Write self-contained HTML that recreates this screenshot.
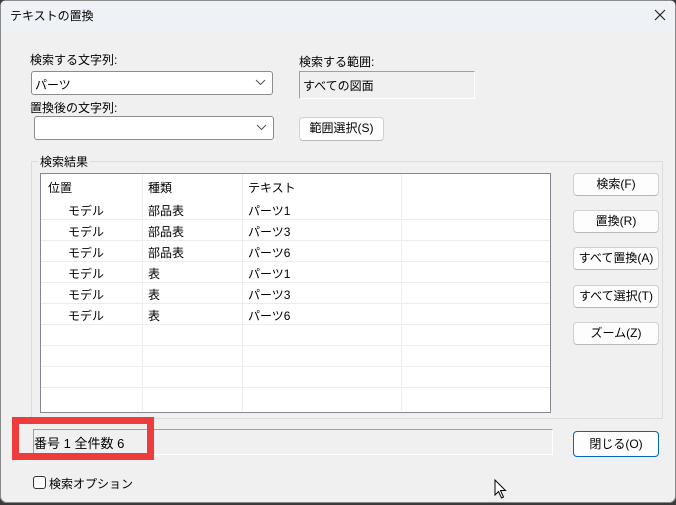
<!DOCTYPE html>
<html><head><meta charset="utf-8"><style>
*{box-sizing:border-box;margin:0;padding:0}
body{width:676px;height:505px;overflow:hidden;background:#3a3a3a;font-family:"Liberation Sans","Noto Sans CJK JP",sans-serif;font-size:12px;color:#000}
#win{position:absolute;left:0;top:0;width:676px;height:503px;background:#f0f0f0;box-shadow:inset 0 0 0 1px #8a8a8a;border-radius:7px;overflow:hidden}
#c{position:absolute;left:0;top:-1px;width:678px;height:507px}
.a{position:absolute;white-space:nowrap}
#title{left:1px;top:2px;width:674px;height:30px;background:#eef2f6}
.combo{background:#fff;border:1px solid #8c8c8c;border-radius:3px}
.btn{background:#fdfdfd;border:1px solid #d0d0d0;border-bottom-color:#b8b8b8;border-radius:4px;text-align:center;line-height:21px}
.hl{position:absolute;left:0;width:509px;height:1px;background:#ececec}
.vl{position:absolute;top:0;width:1px;height:237px;background:#ececec}
.chev{position:absolute;right:6px;top:6px}
</style></head><body>
<div id="win"><div id="c">
<div class="a" id="title"></div>
<div class="a" style="left:10px;top:8px;font-size:12px">テキストの置換</div>
<svg class="a" style="left:654px;top:10px" width="12" height="12"><path d="M1 1L11 11M11 1L1 11" stroke="#222" stroke-width="1.2"/></svg>

<div class="a" style="left:30px;top:52px">検索する文字列:</div>
<div class="a combo" style="left:31px;top:72px;width:242px;height:24px"><span class="a" style="left:3px;top:4px">パーツ</span><svg class="chev" width="11" height="8"><path d="M1 2L5.5 6.5L10 2" fill="none" stroke="#555"/></svg></div>
<div class="a" style="left:299px;top:54px">検索する範囲:</div>
<div class="a" style="left:299px;top:72px;width:176px;height:28px;border-top:1px solid #a0a0a0;border-left:1px solid #a0a0a0;border-bottom:1px solid #fff;border-right:1px solid #fff"><span class="a" style="left:3px;top:5px">すべての図面</span></div>
<div class="a" style="left:30px;top:100px">置換後の文字列:</div>
<div class="a combo" style="left:34px;top:117px;width:240px;height:24px"><svg class="chev" width="11" height="8"><path d="M1 2L5.5 6.5L10 2" fill="none" stroke="#555"/></svg></div>
<div class="a btn" style="left:299px;top:118px;width:85px;height:24px">範囲選択(S)</div>

<div class="a" style="left:31px;top:162px;width:632px;height:258px;border:1px solid #dcdcdc"></div>
<div class="a" style="left:38px;top:154px;background:#f0f0f0;padding:0 2px">検索結果</div>

<div class="a" style="left:40px;top:174px;width:511px;height:240px;background:#fff;border:1px solid #828790">
 <div class="vl" style="left:101px"></div><div class="vl" style="left:201px"></div><div class="vl" style="left:360px"></div>
 <div class="hl" style="top:45px"></div><div class="hl" style="top:66px"></div><div class="hl" style="top:87px"></div><div class="hl" style="top:108px"></div><div class="hl" style="top:129px"></div><div class="hl" style="top:150px"></div><div class="hl" style="top:171px"></div><div class="hl" style="top:192px"></div><div class="hl" style="top:213px"></div>
 <div class="a" style="left:7px;top:5px">位置</div><div class="a" style="left:107px;top:5px">種類</div><div class="a" style="left:207px;top:5px">テキスト</div>
 <div class="a" style="left:27px;top:27px;line-height:21px">モデル<br>モデル<br>モデル<br>モデル<br>モデル<br>モデル</div>
 <div class="a" style="left:107px;top:27px;line-height:21px">部品表<br>部品表<br>部品表<br>表<br>表<br>表</div>
 <div class="a" style="left:207px;top:27px;line-height:21px">パーツ1<br>パーツ3<br>パーツ6<br>パーツ1<br>パーツ3<br>パーツ6</div>
</div>

<div class="a btn" style="left:573px;top:174px;width:86px;height:23px">検索(F)</div>
<div class="a btn" style="left:573px;top:211px;width:86px;height:23px">置換(R)</div>
<div class="a btn" style="left:573px;top:248px;width:86px;height:23px">すべて置換(A)</div>
<div class="a btn" style="left:573px;top:286px;width:86px;height:23px">すべて選択(T)</div>
<div class="a btn" style="left:573px;top:323px;width:86px;height:23px">ズーム(Z)</div>

<div class="a" style="left:33px;top:430px;width:520px;height:26px;border-top:1px solid #a0a0a0;border-left:1px solid #a0a0a0;border-bottom:1px solid #fff;border-right:1px solid #fff"><span class="a" style="left:0;top:3px;font-size:13px">番号 1 全件数 6</span></div>
<div class="a" style="left:12px;top:418px;width:142px;height:43px;border:7px solid #ee3b3b"></div>
<div class="a btn" style="left:573px;top:432px;width:86px;height:26px;line-height:24px;border:1px solid #0067c0">閉じる(O)</div>

<div class="a" style="left:33px;top:477px;width:13px;height:13px;border:1px solid #333;border-radius:3px;background:#fff"></div>
<div class="a" style="left:49px;top:476px">検索オプション</div>
<svg class="a" style="left:494px;top:480px" width="14" height="20"><path d="M1 1L1 16L4.5 12.5L7.5 19L9.5 18L6.5 11.5L11.5 11.5Z" fill="#fff" stroke="#000" stroke-width="1"/></svg>
</div></div>
</body></html>
